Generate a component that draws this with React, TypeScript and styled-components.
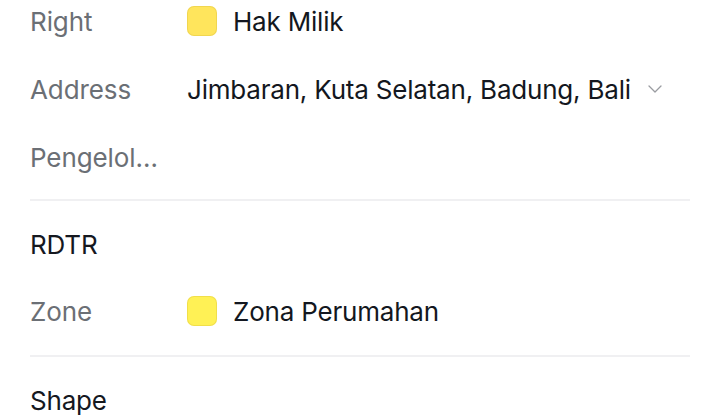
import React from "react";
import styled, { createGlobalStyle } from "styled-components";

const GlobalStyle = createGlobalStyle`
  html, body {
    margin: 0;
    padding: 0;
    background: #ffffff;
    overflow: hidden;
  }
  body {
    font-family: "Inter", "Noto Sans", sans-serif;
  }
`;

type Field = {
  label: string;
  value?: string;
  swatch?: string;
  dropdown?: boolean;
};

const landFields: Field[] = [
  { label: "Right", value: "Hak Milik", swatch: "#ffe55c" },
  { label: "Address", value: "Jimbaran, Kuta Selatan, Badung, Bali", dropdown: true },
  { label: "Pengelola Lahan" },
];

const rdtrFields: Field[] = [{ label: "Zone", value: "Zona Perumahan", swatch: "#fff155" }];

const Chevron = () => (
  <svg width="14" height="8" viewBox="0 0 14 8" fill="none">
    <path d="M1 1l6 6 6-6" stroke="#9a9ca1" strokeWidth="1.3" strokeLinecap="round" strokeLinejoin="round" />
  </svg>
);

const FieldRow = ({ field }: { field: Field }) => (
  <Row>
    <Label>{field.label}</Label>
    {field.value && (
      <Value>
        {field.swatch && <Swatch color={field.swatch} />}
        <ValueText>{field.value}</ValueText>
        {field.dropdown && (
          <ChevronWrap>
            <Chevron />
          </ChevronWrap>
        )}
      </Value>
    )}
  </Row>
);

export default function App() {
  return (
    <>
      <GlobalStyle />
      <Panel>
        <Section>
          {landFields.map((f) => (
            <FieldRow key={f.label} field={f} />
          ))}
        </Section>
        <Divider $gap={8} />
        <Section>
          <Heading>RDTR</Heading>
          {rdtrFields.map((f) => (
            <FieldRow key={f.label} field={f} />
          ))}
        </Section>
        <Divider $gap={10} />
        <Section>
          <Heading>Shape</Heading>
        </Section>
      </Panel>
    </>
  );
}

const Panel = styled.div`
  width: 720px;
  margin-top: -13px;
  padding: 0 30px;
  box-sizing: border-box;
  display: flex;
  flex-direction: column;
`;

const Section = styled.div`
  display: flex;
  flex-direction: column;
`;

const Row = styled.div`
  height: 68px;
  display: flex;
  align-items: center;
`;

const Label = styled.div`
  width: 128px;
  flex-shrink: 0;
  font-size: 26px;
  color: #6b6f75;
  white-space: nowrap;
  overflow: hidden;
  text-overflow: ellipsis;
  letter-spacing: -0.1px;
`;

const Value = styled.div`
  margin-left: 29px;
  display: flex;
  align-items: center;
  gap: 16px;
`;

const Swatch = styled.span<{ color: string }>`
  width: 30px;
  height: 30px;
  border-radius: 7px;
  background: ${(p) => p.color};
  box-shadow: inset 0 0 0 1px rgba(200, 170, 40, 0.25);
  flex-shrink: 0;
`;

const ValueText = styled.span`
  font-size: 26px;
  color: #131720;
  letter-spacing: -0.2px;
  white-space: nowrap;
`;

const ChevronWrap = styled.span`
  display: flex;
  align-items: center;
  margin-left: 1px;
`;

const Divider = styled.hr<{ $gap: number }>`
  margin: ${(p) => p.$gap}px 0 0;
  border: 0;
  height: 2px;
  background: #f0f0f2;
`;

const Heading = styled.div`
  margin-top: 11px;
  height: 65px;
  display: flex;
  align-items: center;
  font-size: 26px;
  color: #15181f;
  letter-spacing: -0.2px;
`;
